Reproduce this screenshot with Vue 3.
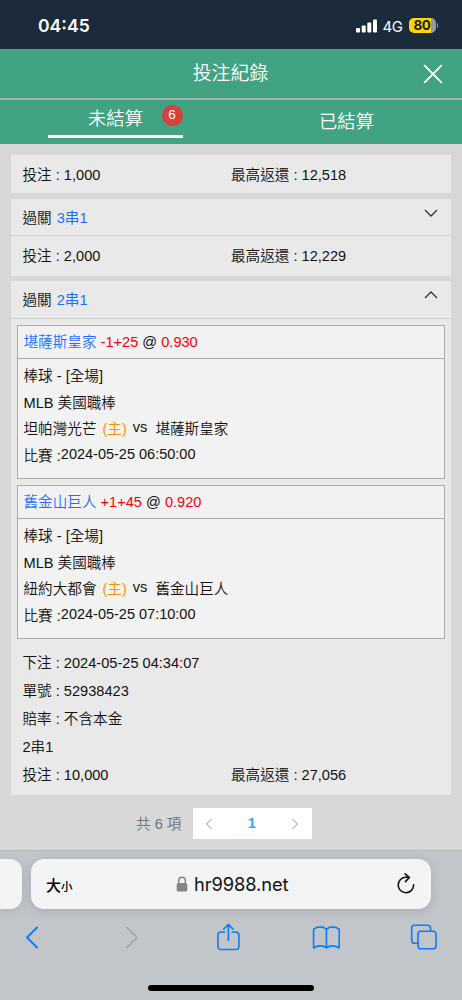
<template>
  <div class="phone">
    <div class="status-bar">
      <span class="clock">04<i>:</i>45</span>
      <div class="status-right">
        <svg class="signal" width="21" height="14" viewBox="0 0 21 14">
          <rect x="0" y="9" width="4" height="4.6" rx="1" />
          <rect x="5.7" y="6.6" width="4" height="7" rx="1" />
          <rect x="11.3" y="3.6" width="4" height="10" rx="1" />
          <rect x="17" y="0.6" width="4" height="13" rx="1" />
        </svg>
        <span class="network">4G</span>
        <div class="battery"><span>80</span></div>
        <i class="battery-tip"></i>
      </div>
    </div>

    <header class="page-header">
      <h1>投注紀錄</h1>
      <svg class="close" width="20" height="20" viewBox="0 0 20 20">
        <path d="M1.7 1.7 18.3 18.3M18.3 1.7 1.7 18.3" />
      </svg>
    </header>

    <nav class="tabs">
      <div class="tab active">
        <span class="tab-label">未結算</span>
        <span class="badge">6</span>
      </div>
      <div class="tab"><span class="tab-label">已結算</span></div>
    </nav>

    <main class="content">
      <section class="card first">
        <div class="amount-row">
          <span>投注 : 1,000</span>
          <span>最高返還 : 12,518</span>
        </div>
      </section>

      <section class="card second">
        <div class="card-head">
          <span>過關<b>3串1</b></span>
          <svg width="14" height="8" viewBox="0 0 14 8"><path d="M1 1 7 7 13 1" /></svg>
        </div>
        <div class="amount-row">
          <span>投注 : 2,000</span>
          <span>最高返還 : 12,229</span>
        </div>
      </section>

      <section class="card">
        <div class="card-head">
          <span>過關<b>2串1</b></span>
          <svg width="14" height="8" viewBox="0 0 14 8"><path d="M1 7 7 1 13 7" /></svg>
        </div>
        <div class="matches">
          <article v-for="m in matches" :key="m.pick" class="match">
            <div class="match-head">
              <span class="pick">{{ m.pick }}</span>&nbsp;<span class="odds">{{ m.line }}</span>
              @ <span class="odds">{{ m.odds }}</span>
            </div>
            <div class="match-body">
              <p>棒球 - [全場]</p>
              <p>MLB 美國職棒</p>
              <p>{{ m.home }}<span class="host">(主)</span><span class="vs">vs</span>{{ m.pick }}</p>
              <p>比賽 :<span class="time">{{ m.time }}</span></p>
            </div>
          </article>
        </div>
        <div class="details">
          <p v-for="d in details" :key="d">{{ d }}</p>
          <p class="totals"><span>投注 : 10,000</span><span>最高返還 : 27,056</span></p>
        </div>
      </section>

      <div class="pagination">
        <span class="total">共 6 項</span>
        <div class="pager">
          <svg width="8" height="12" viewBox="0 0 8 12"><path d="M6.5 1 1.5 6 6.5 11" /></svg>
          <b>1</b>
          <svg width="8" height="12" viewBox="0 0 8 12"><path d="M1.5 1 6.5 6 1.5 11" /></svg>
        </div>
      </div>
    </main>

    <footer class="browser">
      <div class="address-row">
        <div class="prev-page"></div>
        <div class="address">
          <span class="text-size">大<small>小</small></span>
          <span class="url">
            <svg width="12" height="16" viewBox="0 0 12 16">
              <path class="shackle" d="M2.7 8V4.5a3.3 3.3 0 0 1 6.6 0V8" />
              <rect x="0.7" y="7" width="10.6" height="8.5" rx="1.6" />
            </svg>
            hr9988.net
          </span>
          <svg class="reload" width="20" height="22" viewBox="0 0 20 22">
            <path d="M17.6 11.8A7.7 7.7 0 1 1 10 4.3h3.2M9 .8l4.4 3.6L9.4 8.6" />
          </svg>
        </div>
        <div class="next-page"></div>
      </div>
      <div class="toolbar">
        <svg width="28" height="28" viewBox="0 0 28 28"><path class="thick" d="M19 4.5 9 14.5 19 24.5" /></svg>
        <svg class="disabled" width="28" height="28" viewBox="0 0 28 28"><path d="M11 4.5 21 14.5 11 24.5" /></svg>
        <svg width="28" height="28" viewBox="0 0 28 28">
          <path d="M10.6 9H6.4A3 3 0 0 0 3.9 12v11.5a3 3 0 0 0 3 3h15a3 3 0 0 0 3-3V12a3 3 0 0 0-3-3h-3.7M14.4 17.5V1.5M9.6 6.2l4.8-4.8 4.8 4.8" />
        </svg>
        <svg width="28" height="28" viewBox="0 0 28 28">
          <path d="M14.4 6.3C11.4 3 5.2 3 1.6 6.3V25c3.6-2.8 9.8-2.8 12.8 0 3-2.8 9.2-2.8 12.8 0V6.3C23.6 3 17.4 3 14.4 6.3V25" />
        </svg>
        <svg width="28" height="28" viewBox="0 0 28 28">
          <path d="M8 20.2H4.5a2.8 2.8 0 0 1-2.8-2.8V5a2.8 2.8 0 0 1 2.8-2.8h13.2A2.8 2.8 0 0 1 20.5 5v3.2" />
          <rect x="8" y="8.2" width="18" height="17.6" rx="2.8" />
        </svg>
      </div>
      <div class="home-indicator"></div>
    </footer>
  </div>
</template>

<script setup>
const matches = [
  { pick: '堪薩斯皇家', line: '-1+25', odds: '0.930', home: '坦帕灣光芒', time: '2024-05-25 06:50:00' },
  { pick: '舊金山巨人', line: '+1+45', odds: '0.920', home: '紐約大都會', time: '2024-05-25 07:10:00' },
];

const details = [
  '下注 : 2024-05-25 04:34:07',
  '單號 : 52938423',
  '賠率 : 不含本金',
  '2串1',
];
</script>

<style>
body { margin: 0; }
</style>

<style scoped>
* { box-sizing: border-box; }
.phone {
  width: 462px;
  height: 1000px;
  overflow: hidden;
  display: flex;
  flex-direction: column;
  background: #d7d7d7;
  color: #111;
  font-family: "Liberation Sans", "Noto Sans CJK TC", sans-serif;
  font-size: 14.6px;
  font-weight: 350;
}
p, h1 { margin: 0; }
svg { display: block; fill: none; flex-shrink: 0; }

.status-bar { height: 49px; background: #1c2b3b; color: #fff; display: flex; justify-content: space-between; align-items: center; padding: 2px 24px 0 38px; font-family: Inter, sans-serif; flex-shrink: 0; }
.clock { font-size: 17.6px; font-weight: 600; }
.clock i { font-style: normal; position: relative; top: -1px; }
.status-right { display: flex; align-items: center; }
.signal { fill: #fff; }
.network { font-size: 15px; font-weight: 400; letter-spacing: -0.4px; margin: 1px 0 0 6px; width: 26px; }
.battery { width: 27px; height: 15px; border-radius: 5px; background: linear-gradient(90deg, #fdd60a 82%, #9399a0 82%); color: #1c1c10; font-size: 13.5px; font-weight: 700; letter-spacing: -0.4px; line-height: 15px; text-align: center; }
.battery-tip { width: 1.5px; height: 5px; margin-left: 1px; border-radius: 0 2px 2px 0; background: #848b94; }

.page-header { height: 51px; background: #41a381; border-bottom: 2px solid #a3b5ae; color: #fff; display: grid; grid-template-columns: 1fr auto 1fr; align-items: center; padding-right: 19px; flex-shrink: 0; }
.page-header h1 { grid-column: 2; font-size: 18.9px; font-weight: 350; padding-left: 18px; line-height: 48px; }
.close { justify-self: end; stroke: #fff; stroke-width: 1.9; stroke-linecap: round; }

.tabs { height: 44px; background: #41a381; color: #fff; display: flex; flex-shrink: 0; }
.tab { flex: 1; display: flex; justify-content: center; position: relative; font-size: 18.3px; line-height: 44px; }
.tab.active { line-height: 38px; flex: none; width: 135px; height: 38px; margin: 0 48px; border-bottom: 3.5px solid #fff; }
.badge { position: absolute; left: 113.5px; top: 4.5px; width: 21px; height: 21px; border-radius: 50%; background: #d9403a; font-size: 13.5px; font-weight: 400; line-height: 20px; text-align: center; }

.content { height: 706px; padding: 11px 11px 0; flex-shrink: 0; }
.card { background: #e9e9e9; }
.card.first { margin-bottom: 6px; }
.card.second { margin-bottom: 5px; }
.amount-row { height: 40px; display: grid; grid-template-columns: 208.5px 1fr; align-items: center; padding: 0 11.5px 3px; }
.first .amount-row { height: 38px; padding-bottom: 2px; }
.card-head { height: 38px; display: flex; justify-content: space-between; align-items: center; padding: 0 13px 2px 11.5px; border-bottom: 1px solid #cfcfcf; }
.second .card-head { height: 37px; }
.card-head b { font-weight: 400; color: #1f6fff; margin-left: 5px; }
.card-head svg { margin-bottom: 7px; stroke: #333; stroke-width: 1.3; }

.matches { display: flex; flex-direction: column; gap: 6px; padding: 6px 6px 0; }
.match { height: 154px; border: 1px solid #aaa; background: #f2f2f2; }
.match-head { height: 33px; line-height: 32px; padding-left: 5.5px; border-bottom: 1px solid #aaa; white-space: nowrap; }
.pick { color: #1f6fff; }
.match-body .pick { color: inherit; }
.odds { color: #fb0007; }
.match-body { padding: 4px 5.5px 0; }
.match-body p { height: 26.6px; line-height: 26.6px; white-space: nowrap; }
.host { color: #ff9100; margin: 0 6px; }
.vs { position: relative; top: -2px; margin-right: 8px; }
.time { position: relative; top: -2px; font-size: 14.5px; }

.details { padding: 10px 11.5px 6px; }
.details p { height: 28px; line-height: 28px; }
.totals { display: grid; grid-template-columns: 208.5px 1fr; }

.pagination { display: flex; align-items: center; padding-left: 125px; margin-top: 13px; color: #707175; }
.total { width: 56.5px; padding-bottom: 3px; white-space: nowrap; }
.pager { width: 119.5px; height: 31px; background: #fff; display: flex; justify-content: space-between; align-items: center; padding: 0 13px 0 12px; }
.pager b { color: #409eff; padding-bottom: 1px; }
.pager svg { stroke: #bfc3ca; stroke-width: 1.3; }

.browser { height: 150px; background: #c2c6cb; border-top: 1px solid #b4b7ba; flex-shrink: 0; }
.address-row { display: flex; justify-content: space-between; padding-top: 8px; }
.prev-page, .next-page { background: #f3f4f6; height: 50px; box-shadow: 0 2px 12px rgba(0, 0, 0, 0.1); }
.prev-page { width: 22px; border-radius: 0 12px 12px 0; }
.next-page { width: 22px; visibility: hidden; }
.address { width: 400px; height: 50px; border-radius: 13px; background: #f3f4f6; box-shadow: 0 2px 12px rgba(0, 0, 0, 0.14); display: flex; justify-content: space-between; align-items: center; padding: 0 15px; }
.text-size { font-size: 15px; font-weight: 500; color: #000; }
.text-size small { font-size: 11.5px; }
.url { display: flex; align-items: center; gap: 6px; margin-right: 4px; font-family: Inter, sans-serif; font-size: 18.3px; font-weight: 400; color: #111; letter-spacing: -0.1px; }
.url svg { fill: #848489; }
.shackle { fill: none; stroke: #848489; stroke-width: 1.5; }
.reload { stroke: #111; stroke-width: 1.6; stroke-linecap: round; stroke-linejoin: round; }
.toolbar { display: flex; justify-content: space-between; align-items: center; padding: 14px 24px 0 18px; }
.toolbar svg { stroke: #087dff; stroke-width: 1.6; stroke-linecap: round; stroke-linejoin: round; }
.toolbar .thick { stroke-width: 2; }
.toolbar .disabled { stroke: #9fa3a8; }
.home-indicator { width: 166px; height: 6px; margin: 34px auto 0; border-radius: 3px; background: #000; }
</style>
